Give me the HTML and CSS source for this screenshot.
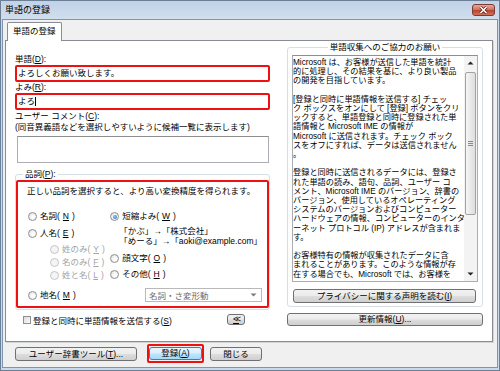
FILE: index.html
```html
<!DOCTYPE html>
<html lang="ja">
  <head>
    <meta charset="utf-8" />
    <title>単語の登録</title>
    <link rel="stylesheet" href="styles.css">
  </head>
  <body>
    <div class="window">
      <div class="title-bar">
        <span class="title-text">単語の登録</span>
        <span class="close-button">
          <svg width="21" height="10" viewBox="0 0 21 10">
            <path d="M7.5 2l6 6M13.5 2l-6 6" stroke="#5a1a14" stroke-width="3" />
            <path d="M7.5 2l6 6M13.5 2l-6 6" stroke="#fff" stroke-width="1.6" />
          </svg>
        </span>
      </div>

      <div class="client">
        <div class="tab-strip">
          <div class="tab">単語の登録</div>
        </div>

        <div class="tab-panel">
          <div class="word-form">
            <label class="field-label">単語(<u>D</u>):</label>
            <div class="mark-box text-input">よろしくお願い致します。</div>
            <label class="field-label">よみ(<u>R</u>):</label>
            <div class="mark-box text-input">よろ<span class="caret"></span></div>
            <label class="field-label comment-label">ユーザー コメント(<u>C</u>):</label>
            <div class="field-label">(同音異義語などを選択しやすいように候補一覧に表示します)</div>
            <div class="comment-box"></div>

            <fieldset class="pos-group">
              <legend>品詞(<u>P</u>):</legend>
              <div class="mark-box pos-box">
                <p class="pos-hint">正しい品詞を選択すると、より高い変換精度を得られます。</p>
                <div class="pos-options">
                  <div class="pos-col-left">
                    <div class="option"><span class="radio"></span>名詞(<u>N</u>)</div>
                    <div class="option person"><span class="radio"></span>人名(<u>E</u>)</div>
                    <div class="sub-options">
                      <div class="option disabled"><span class="radio"></span>姓のみ(<u>Y</u>)</div>
                      <div class="option disabled"><span class="radio"></span>名のみ(<u>F</u>)</div>
                      <div class="option disabled"><span class="radio"></span>姓と名(<u>L</u>)</div>
                    </div>
                  </div>
                  <div class="pos-col-right">
                    <div class="option"><span class="radio checked"></span>短縮よみ(<u>W</u>)</div>
                    <div class="examples">
                      <div>「かぶ」→「株式会社」</div>
                      <div>「めーる」→「aoki@example.com」</div>
                    </div>
                    <div class="option emoticon"><span class="radio"></span>顔文字(<u>O</u>)</div>
                    <div class="option other"><span class="radio"></span>その他(<u>H</u>)</div>
                  </div>
                </div>
                <div class="place-row">
                  <div class="option"><span class="radio"></span>地名(<u>M</u>)</div>
                  <div class="combo">
                    <span>名詞・さ変形動</span>
                    <svg width="7" height="4" viewBox="0 0 7 4"><path d="M0.5 0.5h6L3.5 3.5z" fill="#7a7a7a" /></svg>
                  </div>
                </div>
              </div>
            </fieldset>

            <div class="send-row">
              <span class="checkbox"></span>
              <span>登録と同時に単語情報を送信する(<u>S</u>)</span>
              <button class="btn collapse-button"><u>&lt;&lt;</u></button>
            </div>
          </div>

          <div class="info-col">
            <fieldset class="info-group">
              <legend>単語収集へのご協力のお願い</legend>
              <div class="info-text">
                <div class="info-body">
                  Microsoft は、お客様が送信した単語を統計<br>
                  的に処理し、その結果を基に、より良い製品<br>
                  の開発を目指しています。<br>
                  <br>
                  [登録と同時に単語情報を送信する] チェッ<br>
                  ク ボックスをオンにして [登録] ボタンをクリ<br>
                  ックすると、単語登録と同時に登録された単<br>
                  語情報と Microsoft IME の情報が<br>
                  Microsoft に送信されます。チェック ボック<br>
                  スをオフにすれば、データは送信されません<br>
                  。<br>
                  <br>
                  登録と同時に送信されるデータには、登録さ<br>
                  れた単語の読み、語句、品詞、ユーザー コ<br>
                  メント、Microsoft IME のバージョン、辞書の<br>
                  バージョン、使用しているオペレーティング<br>
                  システムのバージョンおよびコンピューター<br>
                  ハードウェアの情報、コンピューターのインタ<br>
                  ーネット プロトコル (IP) アドレスが含まれま<br>
                  す。<br>
                  <br>
                  お客様特有の情報が収集されたデータに含<br>
                  まれることがあります。このような情報が存<br>
                  在する場合でも、Microsoft では、お客様を
                </div>
                <div class="scrollbar">
                  <div class="scroll-arrow">
                    <svg width="7" height="4" viewBox="0 0 7 4"><path d="M0.5 3.5h6L3.5 0.5z" fill="#222" /></svg>
                  </div>
                  <div class="scroll-thumb">
                    <svg width="5" height="5" viewBox="0 0 5 5"><path d="M0 0.5h5M0 2.5h5M0 4.5h5" stroke="#8a8a8a" stroke-width="1" /></svg>
                  </div>
                  <div class="scroll-arrow down">
                    <svg width="7" height="4" viewBox="0 0 7 4"><path d="M0.5 0.5h6L3.5 3.5z" fill="#222" /></svg>
                  </div>
                </div>
              </div>
              <button class="btn privacy-button">プライバシーに関する声明を読む(<u>I</u>)</button>
            </fieldset>
            <button class="btn update-button">更新情報(<u>U</u>)...</button>
          </div>
        </div>

        <div class="dialog-buttons">
          <button class="btn tool-button">ユーザー辞書ツール(<u>T</u>)...</button>
          <div class="mark-box default-mark">
            <button class="btn btn-default">登録(<u>A</u>)</button>
          </div>
          <button class="btn close-dialog">閉じる</button>
        </div>
      </div>
    </div>
  </body>
</html>
```

FILE: styles.css
```css
* {
  margin: 0;
  padding: 0;
  box-sizing: border-box;
}

body {
  width: 500px;
  height: 371px;
  overflow: hidden;
  font-family: "Liberation Sans", "Noto Sans CJK JP", sans-serif;
  font-size: 8.5px;
  color: #000;
  text-autospace: no-autospace;
}

u {
  text-decoration: underline;
}

/* Window frame */
.window {
  width: 500px;
  height: 371px;
  display: flex;
  flex-direction: column;
  border: 1px solid #6b7f96;
  padding: 0 1px 2px 1px;
  background: #cbd9ea;
}

.title-bar {
  height: 18px;
  display: flex;
  align-items: center;
  justify-content: space-between;
  padding: 0 3px 0 3px;
  background: linear-gradient(#c1d2e7, #d0deee);
}

.title-text {
  font-size: 9px;
  line-height: 12px;
}

.close-button {
  width: 23px;
  height: 12px;
  display: flex;
  align-items: center;
  justify-content: center;
  border: 1px solid #7d3a32;
  border-radius: 3px;
  background: linear-gradient(#e7ab9b 0%, #cf6f5e 48%, #bb3f2f 52%, #d0715a 100%);
}

.client {
  flex: 1;
  display: flex;
  flex-direction: column;
  padding: 2px 4px 4px 2px;
  border: 1px solid #7b96b3;
  background: #f0f0f0;
}

/* Tabs */
.tab-strip {
  height: 18px;
  display: flex;
  padding-left: 2px;
}

.tab {
  position: relative;
  z-index: 1;
  height: 19px;
  padding: 0 5px;
  line-height: 16px;
  background: #fff;
  border: 1px solid #898c95;
  border-bottom: none;
  border-radius: 2px 2px 0 0;
}

.tab-panel {
  flex: 1;
  display: flex;
  gap: 17px;
  padding: 0 9px;
  background: #fff;
  border: 1px solid #898c95;
  box-shadow: 1px 1px 0 #d4d4d4;
}

/* Left column */
.word-form {
  width: 255px;
  padding-top: 13px;
  display: flex;
  flex-direction: column;
}

.field-label {
  display: block;
  height: 11px;
  line-height: 11px;
  white-space: nowrap;
}

.comment-label {
  margin-top: 1px;
}

.mark-box {
  border: 2px solid #ee1111;
  border-radius: 2px;
}

.text-input {
  height: 17px;
  padding-left: 1px;
  line-height: 13px;
  background: #fff;
  display: flex;
  align-items: center;
}

.caret {
  width: 1px;
  height: 9px;
  background: #000;
}

.comment-box {
  height: 27px;
  margin: 3px 1px 0 2px;
  background: #fff;
  border: 1px solid #abadb3;
  border-top-color: #8e8f8f;
}

.pos-group {
  margin-top: 6px;
  padding: 1px 0 1px 0;
  border: 1px solid #d5dfe5;
  border-radius: 3px;
  min-inline-size: 0;
}

.pos-group legend {
  margin-left: 7px;
  padding: 0 2px;
  line-height: 10px;
}

.pos-box {
  height: 128px;
  padding: 4px 5px 0 10px;
}

.pos-hint {
  height: 10px;
  line-height: 10px;
  margin-left: -1px;
  white-space: nowrap;
}

.pos-options {
  display: flex;
  margin-top: 15px;
}

.pos-col-left {
  width: 92px;
}

.option {
  height: 11px;
  line-height: 11px;
  display: flex;
  align-items: center;
  gap: 3px;
  white-space: nowrap;
}

.option.person {
  margin-top: 6px;
}

.sub-options {
  margin-top: 5px;
  padding-left: 22px;
  display: flex;
  flex-direction: column;
  gap: 2px;
}

.option.disabled {
  color: #a3a3a3;
}

.examples {
  margin-top: 4px;
  padding-left: 9px;
  line-height: 10px;
  white-space: nowrap;
}

.option.emoticon {
  margin-top: 7px;
}

.option.other {
  margin-top: 5px;
}

.radio {
  width: 9px;
  height: 9px;
  flex: none;
  position: relative;
  border: 1px solid #8e8f8f;
  border-radius: 50%;
  background: radial-gradient(circle at 60% 60%, #fdfdfd 20%, #dcdcdc 100%);
}

.option.disabled .radio {
  border-color: #c6c6c6;
  background: #f4f4f4;
}

.radio.checked::after {
  content: "";
  position: absolute;
  left: 1.5px;
  top: 1.5px;
  width: 4px;
  height: 4px;
  border-radius: 50%;
  background: radial-gradient(circle at 40% 40%, #8fd0f7, #1a5fb0);
}

.place-row {
  margin-top: 7px;
  height: 14px;
  display: flex;
  align-items: center;
}

.combo {
  width: 117px;
  height: 14px;
  margin-left: auto;
  padding: 0 4px 0 3px;
  display: flex;
  align-items: center;
  justify-content: space-between;
  color: #6d6d6d;
  background: #fff;
  border: 1px solid #b9b9b9;
}

.send-row {
  margin-top: 4px;
  height: 11px;
  padding-left: 8px;
  display: flex;
  align-items: center;
  gap: 2px;
  white-space: nowrap;
}

.checkbox {
  width: 8px;
  height: 8px;
  border: 1px solid #8e8f8f;
  background: linear-gradient(135deg, #dcdcdc, #fbfbfb);
}

.collapse-button {
  width: 18px;
  height: 11px;
  margin-left: auto;
  margin-right: 25px;
  letter-spacing: -2px;
  line-height: 9px;
}

/* Right column */
.info-col {
  width: 196px;
  padding-top: 1px;
  display: flex;
  flex-direction: column;
}

.info-group {
  padding: 3px 4px 3px 4px;
  border: 1px solid #d5dfe5;
  border-radius: 3px;
  min-inline-size: 0;
  display: flex;
  flex-direction: column;
}

.info-group legend {
  margin: 0 auto;
  padding: 0 2px;
  line-height: 10px;
}

.info-text {
  height: 227px;
  display: flex;
  background: #fff;
  border: 1px solid #abadb3;
  border-top-color: #8e8f8f;
}

.info-body {
  flex: 1;
  overflow: hidden;
  padding-top: 2px;
  font-size: 8.2px;
  line-height: 9.2px;
  white-space: nowrap;
}

.scrollbar {
  width: 13px;
  display: flex;
  flex-direction: column;
  background: #f3f3f3;
}

.scroll-arrow {
  height: 14px;
  display: flex;
  align-items: center;
  justify-content: center;
}

.scroll-arrow.down {
  margin-top: auto;
}

.scroll-thumb {
  height: 143px;
  margin: 2px 1px 0 1px;
  display: flex;
  align-items: center;
  justify-content: center;
  border: 1px solid #a2a2a2;
  border-radius: 2px;
  background: linear-gradient(90deg, #f5f5f5, #dedede);
}

.btn {
  font-family: inherit;
  font-size: 8.5px;
  color: #000;
  text-align: center;
  border: 1px solid #707070;
  border-radius: 3px;
  background: linear-gradient(#f2f2f2 0%, #ebebeb 48%, #dddddd 52%, #cfcfcf 100%);
  white-space: nowrap;
}

.privacy-button {
  height: 14px;
  margin: 7px 2px 0 1px;
  line-height: 12px;
}

.update-button {
  height: 13px;
  margin-top: 6px;
  line-height: 11px;
}

/* Bottom buttons */
.dialog-buttons {
  height: 19px;
  margin-top: 2px;
  padding-left: 10px;
  display: flex;
  align-items: center;
}

.tool-button {
  width: 122px;
  height: 14px;
  line-height: 12px;
}

.default-mark {
  margin-left: 10px;
  padding: 1px 0;
}

.btn-default {
  width: 53px;
  height: 13px;
  display: block;
  line-height: 11px;
  border-color: #3c7fb1;
  background: linear-gradient(#eaf6fd 0%, #d9f0fc 48%, #bee6fd 52%, #a7d9f5 100%);
}

.close-dialog {
  width: 52px;
  height: 14px;
  margin-left: 6px;
  line-height: 12px;
}
```
